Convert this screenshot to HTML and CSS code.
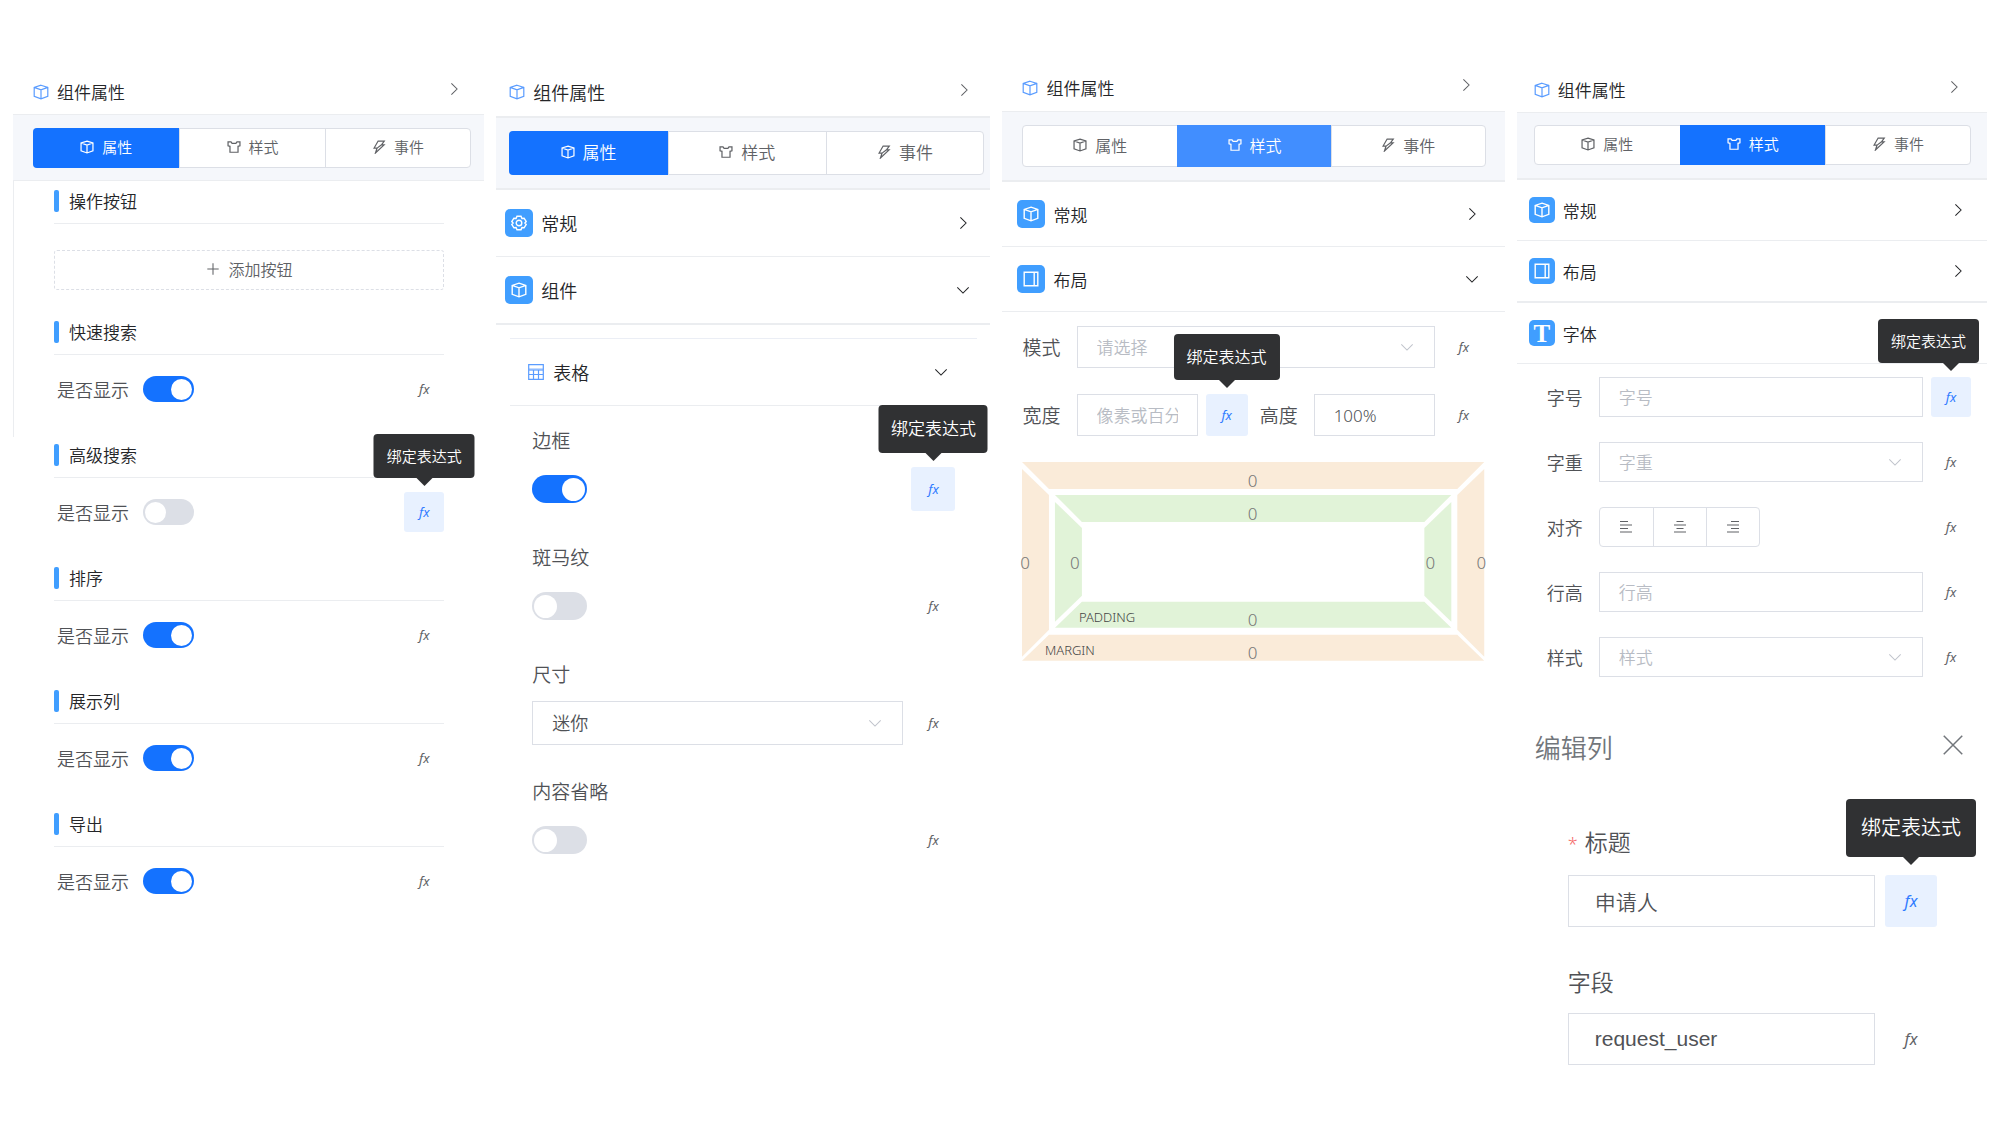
FILE: index.html
```html
<!DOCTYPE html>
<html lang="zh-CN">
<head>
    <meta charset="UTF-8">
    <meta name="viewport" content="width=device-width, initial-scale=1.0">
    <title>组件属性</title>

    <link rel="stylesheet" href="styles.css">
</head>
<body>
    <!-- shared icons -->
    <svg class="sprite" aria-hidden="true">
        <symbol id="i-box" viewBox="0 0 16 16"><path d="M8 1.2L14.8 3.4V12.3L8 14.8L1.2 12.3V3.4ZM1.2 3.4L8 5.8L14.8 3.4M8 5.8V14.8"/></symbol>
        <symbol id="i-shirt" viewBox="0 0 16 16"><path d="M1.2 2.2H4.6L5.8 3.9H10.2L11.4 2.2H14.8V6.6L12.6 7.2V14H3.4V7.2L1.2 6.6Z"/></symbol>
        <symbol id="i-bolt" viewBox="0 0 16 16"><path d="M7 1.2H14L10.8 5.6H13.8L4 14.8L5.8 9.2H2.4Z M6.2 9L10.6 5.6"/></symbol>
        <symbol id="i-gear" viewBox="0 0 16 16"><path d="M6 1.3H10L10.9 3.4L13.1 3.2L15.2 6.5L13.9 8L15.2 9.5L13.1 12.8L10.9 12.6L10 14.7H6L5.1 12.6L2.9 12.8L.8 9.5L2.1 8L.8 6.5L2.9 3.2L5.1 3.4Z"/><circle cx="8" cy="8" r="2.8"/></symbol>
        <symbol id="i-layout" viewBox="0 0 16 16"><path d="M1.2 1.2H14.8V14.8H1.2ZM11.2 1.2V14.8"/></symbol>
        <symbol id="i-table" viewBox="0 0 16 16"><path d="M1 4H15V6.5H1Z" fill="currentColor" opacity=".35" stroke="none"/><path d="M.7 .7H15.3V15.3H.7ZM.7 6H15.3M.7 10.5H15.3M5.5 6V15.3M10.5 6V15.3"/></symbol>
        <symbol id="i-right" viewBox="0 0 16 16"><path d="M5 1.5L11.5 8L5 14.5"/></symbol>
        <symbol id="i-down" viewBox="0 0 16 16"><path d="M1.5 5L8 11.5L14.5 5"/></symbol>
        <symbol id="i-plus" viewBox="0 0 16 16"><path d="M8 1.5V14.5M1.5 8H14.5"/></symbol>
        <symbol id="i-close" viewBox="0 0 16 16"><path d="M.6 .6L15.4 15.4M15.4 .6L.6 15.4"/></symbol>
        <symbol id="i-left-align" viewBox="0 0 12 12"><path d="M0 .5H8M0 4H12M0 7.5H8M0 11H12"/></symbol>
        <symbol id="i-center-align" viewBox="0 0 12 12"><path d="M2.5 .5H9.5M0 4H12M2.5 7.5H9.5M0 11H12"/></symbol>
        <symbol id="i-right-align" viewBox="0 0 12 12"><path d="M4 .5H12M0 4H12M4 7.5H12M0 11H12"/></symbol>
    </svg>

    <main class="board">
        <!-- table sections -->
        <section class="panel panel-sections">
            <header class="panel-head">
                <svg class="icon head-icon"><use href="#i-box"/></svg>
                <h2>组件属性</h2>
                <button type="button" class="collapse" aria-label="收起"><svg class="icon"><use href="#i-right"/></svg></button>
            </header>
            <nav class="tab-bar">
                <div class="tabs">
                    <button type="button" class="tab active"><svg class="icon"><use href="#i-box"/></svg>属性</button>
                    <button type="button" class="tab"><svg class="icon"><use href="#i-shirt"/></svg>样式</button>
                    <button type="button" class="tab"><svg class="icon"><use href="#i-bolt"/></svg>事件</button>
                </div>
            </nav>
            <div class="sections">
                <div class="section section-actions">
                    <h3>操作按钮</h3>
                    <button type="button" class="add-btn"><svg class="icon"><use href="#i-plus"/></svg>添加按钮</button>
                </div>
                <div class="section">
                    <h3>快速搜索</h3>
                    <div class="row">
                        <label for="quickSearch">是否显示</label>
                        <input type="checkbox" class="switch" id="quickSearch" checked>
                        <button type="button" class="fx">fx</button>
                    </div>
                </div>
                <div class="section">
                    <h3>高级搜索</h3>
                    <div class="row">
                        <label for="advSearch">是否显示</label>
                        <input type="checkbox" class="switch" id="advSearch">
                        <div class="fx-wrap">
                            <button type="button" class="fx active">fx</button>
                            <span class="tooltip" role="tooltip">绑定表达式</span>
                        </div>
                    </div>
                </div>
                <div class="section">
                    <h3>排序</h3>
                    <div class="row">
                        <label for="sort">是否显示</label>
                        <input type="checkbox" class="switch" id="sort" checked>
                        <button type="button" class="fx">fx</button>
                    </div>
                </div>
                <div class="section">
                    <h3>展示列</h3>
                    <div class="row">
                        <label for="columns">是否显示</label>
                        <input type="checkbox" class="switch" id="columns" checked>
                        <button type="button" class="fx">fx</button>
                    </div>
                </div>
                <div class="section">
                    <h3>导出</h3>
                    <div class="row">
                        <label for="export">是否显示</label>
                        <input type="checkbox" class="switch" id="export" checked>
                        <button type="button" class="fx">fx</button>
                    </div>
                </div>
            </div>
        </section>

        <!-- table props -->
        <section class="panel panel-table">
            <header class="panel-head">
                <svg class="icon head-icon"><use href="#i-box"/></svg>
                <h2>组件属性</h2>
                <button type="button" class="collapse" aria-label="收起"><svg class="icon"><use href="#i-right"/></svg></button>
            </header>
            <nav class="tab-bar">
                <div class="tabs">
                    <button type="button" class="tab active"><svg class="icon"><use href="#i-box"/></svg>属性</button>
                    <button type="button" class="tab"><svg class="icon"><use href="#i-shirt"/></svg>样式</button>
                    <button type="button" class="tab"><svg class="icon"><use href="#i-bolt"/></svg>事件</button>
                </div>
            </nav>
            <button type="button" class="item"><span class="badge"><svg class="icon"><use href="#i-gear"/></svg></span>常规<svg class="icon arrow"><use href="#i-right"/></svg></button>
            <button type="button" class="item thick"><span class="badge"><svg class="icon"><use href="#i-box"/></svg></span>组件<svg class="icon arrow"><use href="#i-down"/></svg></button>
            <div class="sub">
                <button type="button" class="item sub-item"><svg class="icon table-icon"><use href="#i-table"/></svg>表格<svg class="icon arrow"><use href="#i-down"/></svg></button>
                <div class="stack">
                    <div class="field">
                        <label for="border">边框</label>
                        <div class="row">
                            <input type="checkbox" class="switch" id="border" checked>
                            <div class="fx-wrap">
                                <button type="button" class="fx active">fx</button>
                                <span class="tooltip" role="tooltip">绑定表达式</span>
                            </div>
                        </div>
                    </div>
                    <div class="field">
                        <label for="stripe">斑马纹</label>
                        <div class="row">
                            <input type="checkbox" class="switch" id="stripe">
                            <button type="button" class="fx">fx</button>
                        </div>
                    </div>
                    <div class="field">
                        <label for="size">尺寸</label>
                        <div class="row">
                            <div class="select">
                                <select id="size"><option>迷你</option></select>
                                <svg class="icon"><use href="#i-down"/></svg>
                            </div>
                            <button type="button" class="fx">fx</button>
                        </div>
                    </div>
                    <div class="field">
                        <label for="ellipsis">内容省略</label>
                        <div class="row">
                            <input type="checkbox" class="switch" id="ellipsis">
                            <button type="button" class="fx">fx</button>
                        </div>
                    </div>
                </div>
            </div>
        </section>

        <!-- layout styles -->
        <section class="panel panel-layout">
            <header class="panel-head">
                <svg class="icon head-icon"><use href="#i-box"/></svg>
                <h2>组件属性</h2>
                <button type="button" class="collapse" aria-label="收起"><svg class="icon"><use href="#i-right"/></svg></button>
            </header>
            <nav class="tab-bar">
                <div class="tabs">
                    <button type="button" class="tab"><svg class="icon"><use href="#i-box"/></svg>属性</button>
                    <button type="button" class="tab active"><svg class="icon"><use href="#i-shirt"/></svg>样式</button>
                    <button type="button" class="tab"><svg class="icon"><use href="#i-bolt"/></svg>事件</button>
                </div>
            </nav>
            <button type="button" class="item"><span class="badge"><svg class="icon"><use href="#i-box"/></svg></span>常规<svg class="icon arrow"><use href="#i-right"/></svg></button>
            <button type="button" class="item"><span class="badge"><svg class="icon"><use href="#i-layout"/></svg></span>布局<svg class="icon arrow"><use href="#i-down"/></svg></button>
            <div class="form">
                <div class="row">
                    <label for="mode">模式</label>
                    <div class="select empty">
                        <select id="mode"><option>请选择</option></select>
                        <svg class="icon"><use href="#i-down"/></svg>
                    </div>
                    <button type="button" class="fx">fx</button>
                </div>
                <div class="row">
                    <label for="width">宽度</label>
                    <input type="text" class="text" id="width" placeholder="像素或百分比">
                    <div class="fx-wrap">
                        <button type="button" class="fx active">fx</button>
                        <span class="tooltip" role="tooltip">绑定表达式</span>
                    </div>
                    <label for="height" class="second">高度</label>
                    <input type="text" class="text" id="height" value="100%">
                    <button type="button" class="fx">fx</button>
                </div>
                <svg class="box-model" viewBox="0 0 463 199">
                    <g class="margin-ring">
                        <path d="M0 0H463L436 27H27Z"/>
                        <path d="M0 7L27 33V168L0 195Z"/>
                        <path d="M463 7L436 33V168L463 195Z"/>
                        <path d="M27 173H436L463 199H0Z"/>
                    </g>
                    <g class="padding-ring">
                        <path d="M33 33H430L403 60H60Z"/>
                        <path d="M33 40L60 66V134L33 160Z"/>
                        <path d="M430 40L403 66V134L430 160Z"/>
                        <path d="M60 140H403L430 166H33Z"/>
                    </g>
                    <g class="box-value">
                        <text x="231" y="25">0</text>
                        <text x="231" y="58">0</text>
                        <text x="231" y="164">0</text>
                        <text x="231" y="197">0</text>
                        <text x="3" y="107">0</text>
                        <text x="53" y="107">0</text>
                        <text x="409" y="107">0</text>
                        <text x="460" y="107">0</text>
                    </g>
                    <g class="box-name">
                        <text x="57" y="160">PADDING</text>
                        <text x="23" y="193">MARGIN</text>
                    </g>
                </svg>
            </div>
        </section>

        <!-- font styles + column editor -->
        <div class="column">
            <section class="panel panel-font">
                <header class="panel-head">
                    <svg class="icon head-icon"><use href="#i-box"/></svg>
                    <h2>组件属性</h2>
                    <button type="button" class="collapse" aria-label="收起"><svg class="icon"><use href="#i-right"/></svg></button>
                </header>
                <nav class="tab-bar">
                    <div class="tabs">
                        <button type="button" class="tab"><svg class="icon"><use href="#i-box"/></svg>属性</button>
                        <button type="button" class="tab active"><svg class="icon"><use href="#i-shirt"/></svg>样式</button>
                        <button type="button" class="tab"><svg class="icon"><use href="#i-bolt"/></svg>事件</button>
                    </div>
                </nav>
                <button type="button" class="item"><span class="badge"><svg class="icon"><use href="#i-box"/></svg></span>常规<svg class="icon arrow"><use href="#i-right"/></svg></button>
                <button type="button" class="item thick"><span class="badge"><svg class="icon"><use href="#i-layout"/></svg></span>布局<svg class="icon arrow"><use href="#i-right"/></svg></button>
                <button type="button" class="item"><span class="badge letter">T</span>字体</button>
                <div class="form">
                    <div class="row">
                        <label for="fontSize">字号</label>
                        <input type="text" class="text" id="fontSize" placeholder="字号">
                        <div class="fx-wrap">
                            <button type="button" class="fx active">fx</button>
                            <span class="tooltip tooltip-end" role="tooltip">绑定表达式</span>
                        </div>
                    </div>
                    <div class="row">
                        <label for="fontWeight">字重</label>
                        <div class="select empty">
                            <select id="fontWeight"><option>字重</option></select>
                            <svg class="icon"><use href="#i-down"/></svg>
                        </div>
                        <button type="button" class="fx">fx</button>
                    </div>
                    <div class="row">
                        <span class="label" id="alignLabel">对齐</span>
                        <div class="align-group" role="group" aria-labelledby="alignLabel">
                            <button type="button" aria-label="左对齐"><svg class="icon"><use href="#i-left-align"/></svg></button>
                            <button type="button" aria-label="居中"><svg class="icon"><use href="#i-center-align"/></svg></button>
                            <button type="button" aria-label="右对齐"><svg class="icon"><use href="#i-right-align"/></svg></button>
                        </div>
                        <button type="button" class="fx">fx</button>
                    </div>
                    <div class="row">
                        <label for="lineHeight">行高</label>
                        <input type="text" class="text" id="lineHeight" placeholder="行高">
                        <button type="button" class="fx">fx</button>
                    </div>
                    <div class="row">
                        <label for="fontStyle">样式</label>
                        <div class="select empty">
                            <select id="fontStyle"><option>样式</option></select>
                            <svg class="icon"><use href="#i-down"/></svg>
                        </div>
                        <button type="button" class="fx">fx</button>
                    </div>
                </div>
            </section>

            <section class="panel drawer">
                <header class="drawer-head">
                    <h2>编辑列</h2>
                    <button type="button" class="close" aria-label="关闭"><svg class="icon"><use href="#i-close"/></svg></button>
                </header>
                <div class="stack">
                    <div class="field">
                        <label for="colTitle" class="required">标题</label>
                        <div class="row">
                            <input type="text" class="text" id="colTitle" value="申请人">
                            <div class="fx-wrap">
                                <button type="button" class="fx active">fx</button>
                                <span class="tooltip" role="tooltip">绑定表达式</span>
                            </div>
                        </div>
                    </div>
                    <div class="field">
                        <label for="colField">字段</label>
                        <div class="row">
                            <input type="text" class="text" id="colField" value="request_user">
                            <button type="button" class="fx">fx</button>
                        </div>
                    </div>
                </div>
            </section>
        </div>
    </main>
</body>
</html>
```

FILE: styles.css
```css
* {
    box-sizing: border-box;
}

body {
    margin: 0;
    background-color: #fff;
    color: #242528;
    font-family: "Noto Sans", "Noto Sans CJK SC", sans-serif;
    font-weight: 350;
}

h2,
h3 {
    margin: 0;
    font-weight: inherit;
}

button,
input,
select {
    margin: 0;
    padding: 0;
    border: none;
    background: none;
    color: inherit;
    font: inherit;
}

button {
    cursor: pointer;
}

.sprite {
    display: none;
}

.icon {
    width: 14px;
    height: 14px;
    flex: none;
    fill: none;
    stroke: currentColor;
    stroke-width: 1.2;
}

.board {
    display: grid;
    grid-template-columns: minmax(0, 471fr) minmax(0, 494fr) minmax(0, 502fr) minmax(0, 470fr);
    column-gap: 12px;
    padding: 0 14px 0 13px;
}

/* sizes of each panel */
.panel {
    --title: 17px;
    --label: 18px;
    --tab: 15px;
    --tip: 15px;
    --fx: 13px;
    --control: 40px;
    --badge: 26px;
    --line: 1px;
    --active: #1472ff;
}

.panel-sections {
    --head: 46px;
    padding-top: 69px;
}

.panel-table {
    --title: 18px;
    --label: 19px;
    --tab: 17px;
    --tip: 17px;
    --control: 44px;
    --badge: 28px;
    --line: 2px;
    --head: 50px;
    padding-top: 68px;
}

.panel-layout {
    --label: 19px;
    --tab: 16px;
    --tip: 16px;
    --control: 42px;
    --badge: 28px;
    --head: 48px;
    --active: #418eff;
    padding-top: 64px;
}

.panel-font {
    --head: 46px;
    padding-top: 67px;
}

/* header */
.panel-head {
    display: flex;
    align-items: center;
    height: var(--head);
    padding: 0 23px 0 20px;
    border-bottom: var(--line) solid #ebedf0;
    font-size: var(--title);
}

.panel-head h2 {
    font-size: inherit;
}

.head-icon {
    width: 16px;
    height: 16px;
    margin-right: 8px;
    color: #5a9cff;
}

.collapse {
    display: flex;
    margin-left: auto;
    padding-bottom: 5px;
    color: #606266;
}

.panel-table .panel-head {
    padding: 0 19px 0 13px;
}

.panel-layout .panel-head {
    padding: 0 32px 0 20px;
}

.panel-font .panel-head {
    padding: 0 26px 0 17px;
}

/* tabs */
.tab-bar {
    padding: 13px 13px 12px 20px;
    background-color: #f5f7fb;
    border-bottom: 1px solid #ebedf0;
}

.panel-table .tab-bar {
    padding: 13px 6px 13px 13px;
    border-bottom-width: 2px;
}

.panel-layout .tab-bar {
    padding: 13px 19px 13px 20px;
    border-bottom-width: 2px;
}

.panel-font .tab-bar {
    padding: 12px 16px 13px 17px;
    border-bottom-width: 2px;
}

.tabs {
    display: grid;
    grid-template-columns: repeat(3, 1fr);
    height: var(--control);
    background-color: #fff;
    border: 1px solid #dcdfe6;
    border-radius: 4px;
}

.tab {
    display: flex;
    align-items: center;
    justify-content: center;
    gap: 8px;
    padding-bottom: 3px;
    color: #606266;
    font-size: var(--tab);
}

.tab + .tab {
    border-left: 1px solid #dcdfe6;
}

.tab .icon {
    stroke-width: 1.4;
}

.tab.active {
    margin: -1px 0;
    background-color: var(--active);
    border-color: var(--active);
    color: #fff;
}

.tab.active:first-child {
    margin-left: -1px;
    border-radius: 4px 0 0 4px;
}

/* accordion items */
.item {
    display: flex;
    align-items: center;
    box-sizing: content-box;
    width: 100%;
    height: 60px;
    border-bottom: 1px solid #ebedf0;
    font-size: var(--title);
    text-align: left;
}

.item.thick {
    border-bottom-width: 2px;
}

.badge {
    display: flex;
    align-items: center;
    justify-content: center;
    width: var(--badge);
    height: var(--badge);
    margin: 0 8px 0 12px;
    background-color: #409eff;
    border-radius: 5px;
    color: #fff;
}

.badge .icon {
    width: 16px;
    height: 16px;
    stroke-width: 1.4;
}

.badge.letter {
    font-family: "Liberation Serif", serif;
    font-size: 25px;
    font-weight: bold;
    line-height: 1;
}

.arrow {
    margin-left: auto;
    margin-right: 22px;
}

.panel-table .item {
    height: 66px;
}

.panel-table .badge {
    margin-left: 9px;
}

.panel-table .arrow {
    margin-right: 20px;
}

.panel-layout .item {
    height: 64px;
}

.panel-layout .badge {
    margin-left: 15px;
}

.panel-layout .arrow {
    margin-right: 26px;
}

.sub {
    margin: 13px 13px 0 14px;
    border-top: 1px solid #ebeef5;
}

.table-icon {
    width: 16px;
    height: 16px;
    margin: 0 9px 0 18px;
    color: #5a9cff;
}

.panel-table .sub-item .arrow {
    margin-right: 29px;
}

/* rows and controls */
.row {
    display: flex;
    align-items: center;
    gap: 8px;
    height: var(--control);
}

label,
.label {
    flex: none;
    color: #505256;
    font-size: var(--label);
}

.switch {
    appearance: none;
    display: flex;
    align-items: center;
    width: 51px;
    height: 26px;
    padding: 2px;
    background-color: #dcdfe6;
    border-radius: 13px;
    cursor: pointer;
}

.switch::before {
    content: "";
    width: 21px;
    height: 21px;
    background-color: #fff;
    border-radius: 50%;
}

.switch:checked {
    justify-content: flex-end;
    background-color: var(--active);
}

.text,
.select {
    flex: 1;
    min-width: 0;
    height: var(--control);
    border: 1px solid #dcdfe6;
    color: #505256;
    font-size: var(--title);
}

.text {
    padding: 0 19px;
}

.text::placeholder {
    color: #b8bcc4;
    opacity: 1;
}

.select {
    display: grid;
    align-items: center;
}

.select select,
.select .icon {
    grid-area: 1 / 1;
}

.select select {
    appearance: none;
    width: 100%;
    height: 100%;
    padding: 0 19px;
}

.select .icon {
    justify-self: end;
    margin-right: 20px;
    color: #c0c4cc;
    pointer-events: none;
}

.select.empty {
    color: #b8bcc4;
}

.fx {
    flex: none;
    width: var(--control);
    height: var(--control);
    margin-left: auto;
    border-radius: 3px;
    color: #606266;
    font-size: var(--fx);
    font-style: italic;
    font-weight: 400;
}

.fx.active {
    background-color: #e8f1ff;
    color: #2f7bff;
}

.fx-wrap {
    position: relative;
    display: flex;
    margin-left: auto;
}

.tooltip {
    position: absolute;
    bottom: calc(100% + 14px);
    left: 50%;
    z-index: 1;
    padding: 11px 13px;
    transform: translateX(-50%);
    background-color: #303133;
    border-radius: 4px;
    color: #fff;
    font-size: var(--tip);
    line-height: 22px;
    white-space: nowrap;
}

.tooltip::after {
    content: "";
    position: absolute;
    top: 100%;
    left: 50%;
    margin-left: -8px;
    border: 8px solid transparent;
    border-top-color: #303133;
    border-bottom: none;
}

.tooltip-end {
    left: auto;
    right: -8px;
    transform: none;
}

.tooltip-end::after {
    left: auto;
    right: 20px;
}

/* first panel */
.sections {
    padding: 9px 40px 0 41px;
    background: linear-gradient(#ebedf0, #ebedf0) no-repeat left top / 1px 256px;
}

.section {
    margin-bottom: 35px;
}

.section-actions {
    margin-bottom: 31px;
}

.section h3 {
    display: flex;
    height: 34px;
    border-bottom: 1px solid #ebedf0;
    font-size: var(--title);
    line-height: 24px;
}

.section h3::before {
    content: "";
    width: 5px;
    height: 22px;
    margin-right: 10px;
    background-color: #409eff;
    border-radius: 2px;
}

.section .row {
    gap: 14px;
    margin-top: 14px;
    padding-left: 3px;
}

.add-btn {
    display: flex;
    align-items: center;
    justify-content: center;
    gap: 9px;
    width: 100%;
    height: 40px;
    margin-top: 26px;
    padding-bottom: 2px;
    border: 1px dashed #dcdfe6;
    border-radius: 3px;
    color: #606266;
    font-size: 16px;
}

/* stacked fields */
.stack {
    padding: 17px 22px 0;
}

.field {
    margin-bottom: 29px;
}

.field label {
    display: block;
    margin-bottom: 8px;
    line-height: 36px;
}

.panel-table .switch {
    width: 55px;
    height: 28px;
    border-radius: 14px;
}

.panel-table .switch::before {
    width: 23px;
    height: 23px;
}

.panel-table .tooltip {
    padding: 13px 12px;
}

/* inline forms */
.form {
    display: flex;
    flex-direction: column;
    gap: 26px;
    padding: 14px 20px 0;
}

.form label,
.form .label {
    margin-right: 8px;
}

.form .fx-wrap {
    margin-left: 0;
}

.form .second {
    margin-left: 4px;
}

.panel-layout .tooltip {
    padding: 12px 13px;
}

.panel-font .form {
    gap: 25px;
    padding: 13px 16px 0 30px;
}

.box-model {
    display: block;
    width: 100%;
    overflow: visible;
}

.margin-ring {
    fill: #faebd9;
}

.padding-ring {
    fill: #e1f3d8;
}

.box-value {
    fill: #777;
    font-size: 17px;
    text-anchor: middle;
}

.box-name {
    fill: #444;
    font-size: 13px;
}

.align-group {
    display: flex;
    height: var(--control);
    border: 1px solid #dcdfe6;
    border-radius: 4px;
}

.align-group button {
    display: flex;
    align-items: center;
    justify-content: center;
    width: 53px;
    color: #606266;
}

.align-group button + button {
    border-left: 1px solid #dcdfe6;
}

.align-group .icon {
    width: 12px;
    height: 12px;
}

/* column editor */
.drawer {
    --title: 21px;
    --label: 23px;
    --tip: 20px;
    --fx: 16px;
    --control: 52px;
    padding-top: 52px;
}

.drawer-head {
    display: flex;
    align-items: center;
    height: 36px;
    padding: 0 24px 0 18px;
    color: #72767b;
    font-size: 26px;
}

.drawer-head h2 {
    font-size: inherit;
}

.close {
    display: flex;
    margin-left: auto;
    padding-bottom: 5px;
}

.close .icon {
    width: 20px;
    height: 20px;
}

.drawer .stack {
    padding: 59px 50px 0 51px;
}

.drawer .field {
    margin-bottom: 37px;
}

.drawer .field label {
    margin-bottom: 13px;
}

.drawer .text {
    padding: 0 26px;
    font-family: "Liberation Sans", "Noto Sans CJK SC", sans-serif;
}

.drawer .row {
    gap: 10px;
}

.drawer .tooltip {
    bottom: calc(100% + 18px);
    padding: 18px 15px;
}

.required::before {
    content: "*";
    margin-right: 7px;
    color: #f56c6c;
    font-size: 18px;
}
```
